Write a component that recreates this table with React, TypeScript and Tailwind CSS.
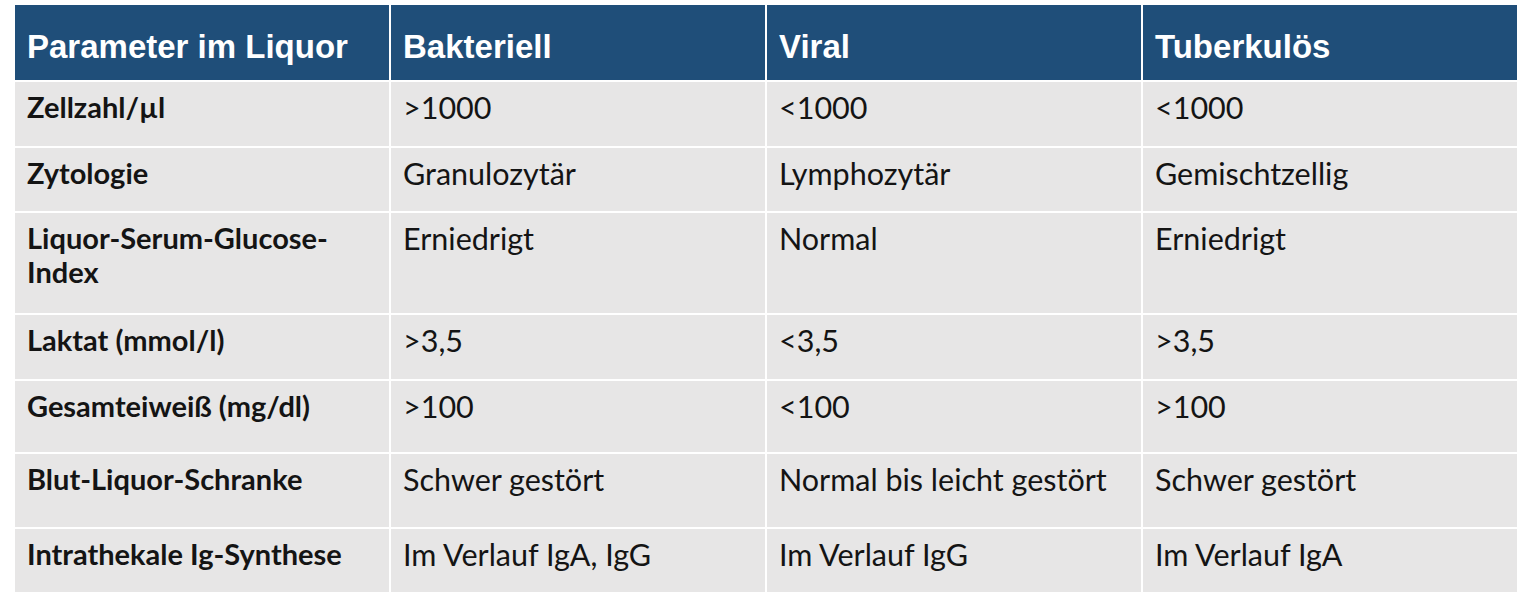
const header = ['Parameter im Liquor', 'Bakteriell', 'Viral', 'Tuberkulös'];

const rows: { cells: string[]; h: string }[] = [
  { cells: ['Zellzahl/µl', '>1000', '<1000', '<1000'], h: 'h-[64px]' },
  { cells: ['Zytologie', 'Granulozytär', 'Lymphozytär', 'Gemischtzellig'], h: 'h-[63px]' },
  { cells: ['Liquor-Serum-Glucose-Index', 'Erniedrigt', 'Normal', 'Erniedrigt'], h: 'h-[100px]' },
  { cells: ['Laktat (mmol/l)', '>3,5', '<3,5', '>3,5'], h: 'h-[64px]' },
  { cells: ['Gesamteiweiß (mg/dl)', '>100', '<100', '>100'], h: 'h-[71px]' },
  { cells: ['Blut-Liquor-Schranke', 'Schwer gestört', 'Normal bis leicht gestört', 'Schwer gestört'], h: 'h-[73px]' },
  { cells: ['Intrathekale Ig-Synthese', 'Im Verlauf IgA, IgG', 'Im Verlauf IgG', 'Im Verlauf IgA'], h: 'h-[63px]' },
];

export default function App() {
  return (
    <div className="w-[1533px] h-[596px] bg-white pl-[15px] pt-[5px]">
      <div className="w-[1502px] grid grid-cols-4 gap-[2px] bg-white">
        {header.map((t) => (
          <div
            key={t}
            className="h-[75px] bg-[#1f4e79] px-[12px] pt-[24px] text-white font-bold text-[33px] leading-[36px] font-['Liberation_Sans',Arial,sans-serif]"
          >
            {t}
          </div>
        ))}
        {rows.map((r) =>
          r.cells.map((c, i) => (
            <div
              key={r.cells[0] + i}
              className={`${r.h} bg-[#e7e6e6] pl-[12px] pr-[20px] pt-[8px] text-[#141414] leading-[34px] font-['Lato','Noto_Sans',sans-serif] ${
                i === 0 ? 'font-bold text-[29px]' : 'font-normal text-[30.5px]'
              }`}
            >
              {c === 'Liquor-Serum-Glucose-Index' ? (
                <>
                  Liquor-Serum-Glucose-
                  <br />
                  Index
                </>
              ) : (
                c
              )}
            </div>
          ))
        )}
      </div>
    </div>
  );
}
